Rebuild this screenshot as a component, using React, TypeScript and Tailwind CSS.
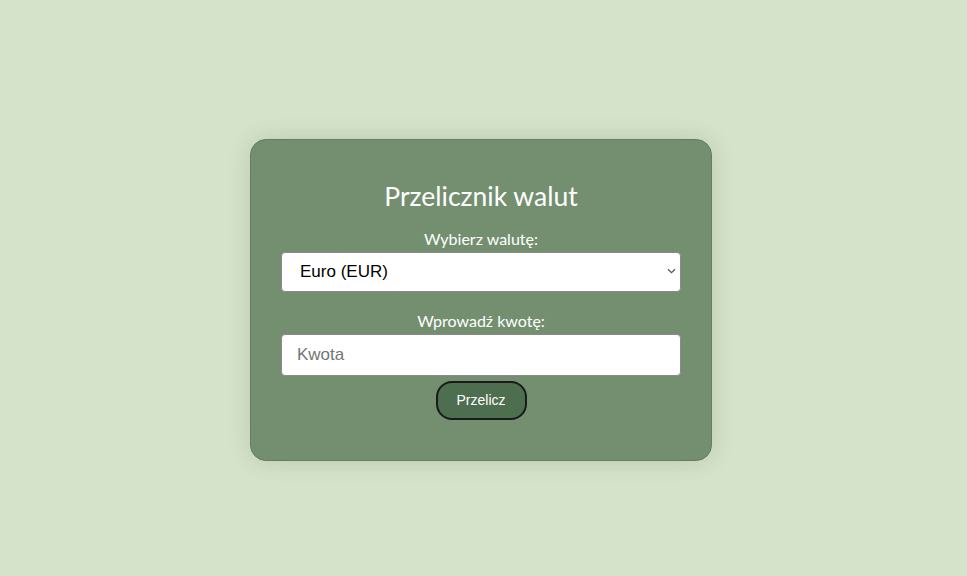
import React from "react";

export default function App() {
  return (
    <div className="w-full h-[576px] bg-[#d4e3c9] flex items-center justify-center pt-[24px] pr-[5px]">
      <div className="w-[462px] h-[322px] bg-[#738f70] border border-[#62805f] rounded-[16px] shadow-[0_0_24px_rgba(0,0,0,0.12)] px-[30px] pt-[38px] flex flex-col items-center font-['Lato',sans-serif] text-white">
        <h1 className="text-[26.5px] leading-[36px] mb-[15px]">Przelicznik walut</h1>
        <label className="text-[16px] leading-[20px] mb-[3px]">Wybierz walutę:</label>
        <div className="relative w-[400px] h-[40px]">
          <select className="appearance-none w-full h-full bg-white text-black rounded-[4px] border border-[#8a8a8a] pl-[18px] pr-[20px] text-[17px] font-['Liberation_Sans',sans-serif] outline-none" defaultValue="EUR">
            <option value="EUR">Euro (EUR)</option>
            <option value="USD">Dolar (USD)</option>
          </select>
          <svg className="absolute right-[5px] top-[16px] pointer-events-none" width="9" height="6" viewBox="0 0 9 6" fill="none">
            <path d="M1 1.2 L4.5 4.6 L8 1.2" stroke="#555" strokeWidth="1.2" />
          </svg>
        </div>
        <label className="text-[16px] leading-[20px] mt-[19px] mb-[3px]">Wprowadź kwotę:</label>
        <input className="w-[400px] h-[42px] bg-white text-black rounded-[4px] border border-[#8a8a8a] px-[15px] text-[17px] font-['Liberation_Sans',sans-serif] placeholder:text-[#757575] outline-none" placeholder="Kwota" />
        <button className="mt-[5px] w-[91px] h-[39px] bg-[#4e6e50] border-2 border-[#1a1a1a] rounded-[16px] text-white text-[14px] font-['Liberation_Sans',sans-serif]">Przelicz</button>
      </div>
    </div>
  );
}
